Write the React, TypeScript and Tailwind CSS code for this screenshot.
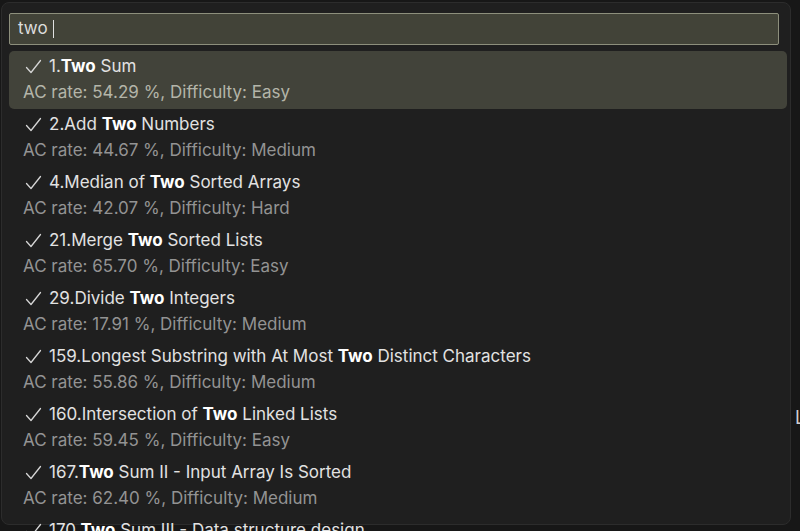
import React from "react";

type Problem = {
  id: number;
  before: string;
  after: string;
  rate: string;
  difficulty: string;
};

const problems: Problem[] = [
  { id: 1, before: "", after: " Sum", rate: "54.29", difficulty: "Easy" },
  { id: 2, before: "Add ", after: " Numbers", rate: "44.67", difficulty: "Medium" },
  { id: 4, before: "Median of ", after: " Sorted Arrays", rate: "42.07", difficulty: "Hard" },
  { id: 21, before: "Merge ", after: " Sorted Lists", rate: "65.70", difficulty: "Easy" },
  { id: 29, before: "Divide ", after: " Integers", rate: "17.91", difficulty: "Medium" },
  {
    id: 159,
    before: "Longest Substring with At Most ",
    after: " Distinct Characters",
    rate: "55.86",
    difficulty: "Medium",
  },
  { id: 160, before: "Intersection of ", after: " Linked Lists", rate: "59.45", difficulty: "Easy" },
  { id: 167, before: "", after: " Sum II - Input Array Is Sorted", rate: "62.40", difficulty: "Medium" },
  { id: 170, before: "", after: " Sum III - Data structure design", rate: "36.90", difficulty: "Easy" },
];

function Check() {
  return (
    <svg width="17" height="16" viewBox="0 0 17 16" className="shrink-0" fill="none">
      <path d="M1.5 8.5 L6 13.5 L15.5 1.5" stroke="#d6d6d6" strokeWidth="1.3" strokeLinecap="round" strokeLinejoin="round" />
    </svg>
  );
}

function Row({ p, active }: { p: Problem; active: boolean }) {
  return (
    <div
      className={
        active
          ? "h-[58px] shrink-0 rounded-[5px] bg-[#42433a] pt-[4px] pl-[14px]"
          : "h-[58px] shrink-0 pt-[4px] pl-[14px]"
      }
    >
      <div className="flex items-center h-6 text-[17px] text-[#e2e2e2]">
        <span className="ml-[2px] mr-[7px]">
          <Check />
        </span>
        <span className="whitespace-nowrap">
          {p.id}.{p.before}
          <span className="font-bold text-white">Two</span>
          {p.after}
        </span>
      </div>
      <div
        className={
          active
            ? "mt-px h-6 leading-6 text-[17px] text-[#b4b5a9] whitespace-nowrap"
            : "mt-px h-6 leading-6 text-[17px] text-[#939393] whitespace-nowrap"
        }
      >
        AC rate: {p.rate} %, Difficulty: {p.difficulty}
      </div>
    </div>
  );
}

export default function App() {
  return (
    <div
      className="h-[531px] w-[800px] overflow-hidden bg-[#171717] flex"
      style={{ fontFamily: "Inter, 'Noto Sans', sans-serif" }}
    >
      <div className="relative mt-[2px] ml-px w-[790px] h-[523px] rounded-[8px] bg-[#1f1f1f] border border-[#2c2c2c] pl-[7px] pr-[3px] pt-[10px] flex flex-col">
        <div className="h-8 shrink-0 mr-[8px] flex items-center rounded-[2px] border border-[#8d8f7c] bg-[#424338] pl-[8px] text-[17px] text-[#dcdcdc]">
          <span>two</span>
          <span className="ml-[5px] inline-block w-px h-[18px] bg-[#e0e0e0]" />
        </div>
        <div className="mt-[6px] flex flex-col">
          {problems.map((p, i) => (
            <Row key={p.id} p={p} active={i === 0} />
          ))}
        </div>
      </div>
      <div className="flex-1 relative">
        <span className="absolute top-[404px] left-[4px] text-[18px] text-[#cfcfcf]">L</span>
      </div>
    </div>
  );
}
